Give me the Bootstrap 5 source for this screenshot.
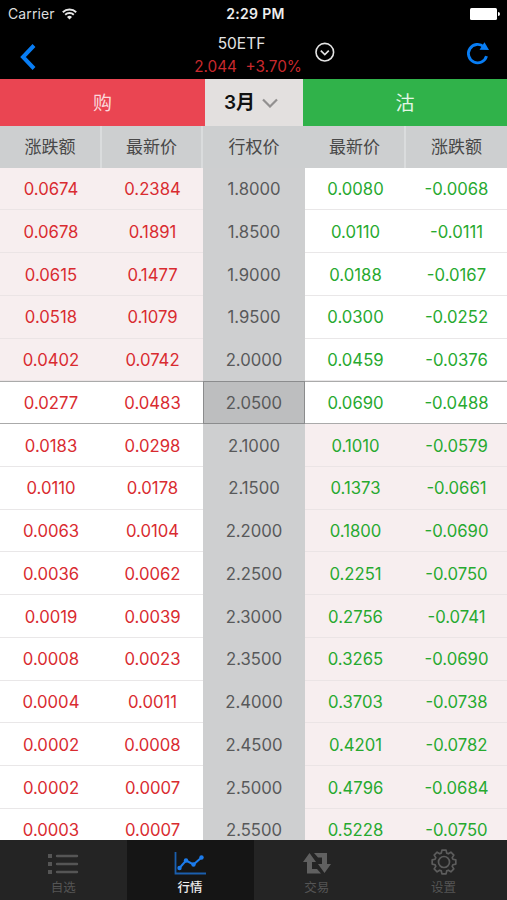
<!DOCTYPE html>
<html lang="zh-CN">
<head>
<meta charset="utf-8">
<meta name="viewport" content="width=device-width, initial-scale=1">
<title>50ETF</title>
<link href="https://cdn.jsdelivr.net/npm/bootstrap@5.3.0/dist/css/bootstrap.min.css" rel="stylesheet">
<style>
body{width:507px;height:900px;font-family:Inter,"Noto Sans CJK SC",sans-serif;background:#000;line-height:1}
svg{display:block;flex:none}
.status{height:28px;font-size:14px;color:#ddd;padding:0 7px 0 8px;display:grid;grid-template-columns:1fr auto 1fr}
.carrier{letter-spacing:.1px}
.wifi{margin-left:7px}
.clock{font-weight:600;color:#eee;letter-spacing:.3px;padding-left:3px}
.topbar{height:51px;display:grid;grid-template-columns:194px 108px 1fr;padding-right:17px}
.back{margin-top:7px}
.name{font-size:15.5px;color:#e4e4e4;padding-right:13px;margin-top:8px}
.quote{font-size:15.3px;color:#c9292d;white-space:pre;margin-top:7px}
.tabs3,.grid5{display:grid;grid-template-columns:205px 98px 204px}
.tabs3{height:47px;font-size:19px}
.tabs3>div,.grid5>div{display:flex;align-items:center;justify-content:center}
.buy{background:#ea4552;color:#fbd9dc}
.month{background:#e3e0df;color:#111;font-weight:600;gap:7px;padding-right:6px}
.sell{background:#30b24a;color:#e4f6e6}
.tabs3>.buy,.tabs3>.sell{padding-top:2px}
.grid5{grid-template-columns:102px 101px 102px 101px 101px}
.heads{height:41.5px;font-size:17px;color:#484848;background:#cdcfd0}
.heads>div{padding-top:2px}
.heads>.edge{border-right:2px solid #dadcdd}
.rows{height:672.5px}
.line{height:42.76px;font-size:16.7px;flex:none}
.line>div{border-bottom:1px solid #e9e7e8;padding-top:2px}
.line>.up{color:#d92b30;background:#fff}
.line>.down{color:#27a92f;background:#fff}
.line>.strike{color:#58595a;background:#cecfd0;border-color:#cecfd0}
.line>.itm{background:#f7eeef;border-color:#ebe4e5}
.atm>div{border-top:1px solid #aaa;border-bottom-color:#aaa}
.line.atm>.strike{background:#bdbebf;border:1px solid #8b8c8d}
.dock{height:60px;background:#242424;font-size:12.5px}
.dock>a{color:#555;text-decoration:none;padding-top:9px}
.dock>a.on{background:#151515;color:#eee;font-weight:500}
.dock svg{height:27px;margin-bottom:6px}
</style>
<script src="https://cdn.jsdelivr.net/npm/bootstrap@5.3.0/dist/js/bootstrap.bundle.min.js"></script>
</head>
<body class="d-flex flex-column overflow-hidden">
<div class="status align-items-center">
  <div class="d-flex align-items-center"><span class="carrier">Carrier</span>
    <svg class="wifi" width="15" height="12" viewBox="0 0 15 12" fill="none" stroke="#e6e6e6" stroke-width="1.9"><path d="M.8 4.2a9.6 9.6 0 0 1 13.4 0M3.2 6.8a6.2 6.2 0 0 1 8.6 0"/><path d="M7.5 11.5 5 8.9a3.6 3.6 0 0 1 5 0z" fill="#e6e6e6" stroke="none"/></svg>
  </div>
  <div class="clock">2:29 PM</div>
  <svg class="ms-auto" width="30" height="12" viewBox="0 0 30 12" fill="#fff"><rect width="27" height="12" rx="1.5"/><path d="M28 4q2 0 2 2t-2 2z"/></svg>
</div>
<header class="topbar">
  <div class="ps-3 d-flex align-items-center"><svg class="back" width="24" height="30" viewBox="0 0 24 30" fill="none" stroke="#087df4" stroke-width="4"><path d="M18 3.500 7 15l11 11.500"/></svg></div>
  <div class="d-flex flex-column align-items-center">
    <div class="name">50ETF</div>
    <div class="quote">2.044  +3.70%</div>
  </div>
  <div class="d-flex justify-content-between">
    <svg class="ms-2" width="30" height="48" viewBox="0 0 30 48" fill="none" stroke="#e4e4e4"><circle cx="14.8" cy="24.2" r="8.8" stroke-width="1.6"/><path d="m10.8 22.6 4 4 4-4" stroke-width="1.6"/></svg>
    <svg width="25" height="48" viewBox="0 0 25 48" fill="none" stroke="#087df4"><path d="M18.8 18.8a9.2 9.2 0 1 0 2.7 9.3" stroke-width="2.9"/><path d="m19.5 14.2 4.5 7.8-9.500-.3z" fill="#087df4" stroke="none"/></svg>
  </div>
</header>
<div class="tabs3">
  <div class="buy">购</div>
  <div class="month"><span>3月</span><svg width="16" height="10" viewBox="0 0 16 10" fill="none" stroke="#929090" stroke-width="2.2"><path d="m1 1.500 7 7 7-7"/></svg></div>
  <div class="sell">沽</div>
</div>
<div class="grid5 heads">
  <div class="edge">涨跌额</div><div class="edge">最新价</div><div class="edge border-end-0">行权价</div><div class="edge">最新价</div><div>涨跌额</div>
</div>
<main class="rows overflow-hidden d-flex flex-column" id="chain"></main>
<nav class="dock row row-cols-4 g-0">
  <a href="#" class="col d-flex flex-column align-items-center"><svg width="32" viewBox="0 0 32 27" fill="#555"><path d="M1 5h4v4H1zm0 8h4v4H1zm0 8h4v4H1z"/><path d="M10 7h20M10 15h20M10 23h20" stroke="#555" stroke-width="2.4" stroke-linecap="round"/></svg>自选</a>
  <a href="#" class="col d-flex flex-column align-items-center on"><svg width="32" viewBox="0 0 32 27" fill="none" stroke="#1c7cec"><path d="M1.5 3v21.5H32" stroke="#1b5fae" stroke-width="1.8"/><path d="m5.5 19 6.5-7.5 7.5 4 8-7" stroke-width="2"/><g fill="#1c7cec" stroke="none"><circle cx="5.5" cy="19" r="2.2"/><circle cx="12" cy="11.5" r="2.2"/><circle cx="19.5" cy="15.5" r="2.2"/><circle cx="27.5" cy="8.5" r="2.2"/></g></svg>行情</a>
  <a href="#" class="col d-flex flex-column align-items-center"><svg width="30" viewBox="0 0 30 27" fill="#606060"><path d="M7.500 4 14 13h-4v7h5l4 4.500H5V13H1z"/><path d="m12 4h13v11h4l-6.500 9L16 15h4V8.500h-4z"/></svg>交易</a>
  <a href="#" class="col d-flex flex-column align-items-center"><svg width="28" viewBox="0 0 28 27" fill="none" stroke="#5c5c5c" stroke-width="1.7" stroke-linejoin="round"><path id="cog"/><circle cx="14" cy="13" r="5.5"/></svg>设置</a>
</nav>
<script>
const quotes = `0.0674 0.2384 1.8000 0.0080 -0.0068
0.0678 0.1891 1.8500 0.0110 -0.0111
0.0615 0.1477 1.9000 0.0188 -0.0167
0.0518 0.1079 1.9500 0.0300 -0.0252
0.0402 0.0742 2.0000 0.0459 -0.0376
0.0277 0.0483 2.0500 0.0690 -0.0488
0.0183 0.0298 2.1000 0.1010 -0.0579
0.0110 0.0178 2.1500 0.1373 -0.0661
0.0063 0.0104 2.2000 0.1800 -0.0690
0.0036 0.0062 2.2500 0.2251 -0.0750
0.0019 0.0039 2.3000 0.2756 -0.0741
0.0008 0.0023 2.3500 0.3265 -0.0690
0.0004 0.0011 2.4000 0.3703 -0.0738
0.0002 0.0008 2.4500 0.4201 -0.0782
0.0002 0.0007 2.5000 0.4796 -0.0684
0.0003 0.0007 2.5500 0.5228 -0.0750`.split("\n");
const atm = 5;
document.getElementById("chain").innerHTML = quotes.map((q, i) => {
  const cells = q.split(" ").map((v, c) => {
    const side = c < 2 ? "up" : c === 2 ? "strike" : "down";
    const itm = (c < 2 && i < atm) || (c > 2 && i > atm) ? " itm" : "";
    return `<div class="${side}${itm}">${v}</div>`;
  }).join("");
  return `<div class="grid5 line${i === atm ? " atm" : ""}">${cells}</div>`;
}).join("");
// Gear outline: eight teeth around the hub.
const pts = [];
for (let k = 0; k < 8; k++) {
  [[-17, 9.3], [-10, 12], [10, 12], [17, 9.3]].forEach(([d, r]) => {
    const a = (k * 45 + d) * Math.PI / 180;
    pts.push((14 + r * Math.sin(a)).toFixed(2) + " " + (13 - r * Math.cos(a)).toFixed(2));
  });
}
document.getElementById("cog").setAttribute("d", "M" + pts.join("L") + "z");
</script>
</body>
</html>
